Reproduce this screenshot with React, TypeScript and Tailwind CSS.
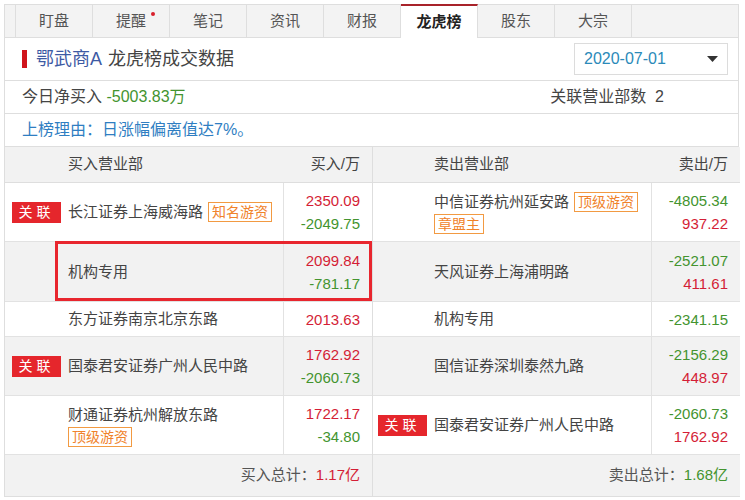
import React from "react";

const tabs = ["盯盘", "提醒", "笔记", "资讯", "财报", "龙虎榜", "股东", "大宗"];

type Row = {
  name: string;
  linked?: boolean;
  tags?: string[];
  nextTags?: string[];
  values: { v: string; up: boolean }[];
};

const buyRows: Row[] = [
  {
    name: "长江证券上海威海路",
    linked: true,
    tags: ["知名游资"],
    values: [
      { v: "2350.09", up: true },
      { v: "-2049.75", up: false },
    ],
  },
  {
    name: "机构专用",
    values: [
      { v: "2099.84", up: true },
      { v: "-781.17", up: false },
    ],
  },
  { name: "东方证券南京北京东路", values: [{ v: "2013.63", up: true }] },
  {
    name: "国泰君安证券广州人民中路",
    linked: true,
    values: [
      { v: "1762.92", up: true },
      { v: "-2060.73", up: false },
    ],
  },
  {
    name: "财通证券杭州解放东路",
    nextTags: ["顶级游资"],
    values: [
      { v: "1722.17", up: true },
      { v: "-34.80", up: false },
    ],
  },
];

const sellRows: Row[] = [
  {
    name: "中信证券杭州延安路",
    tags: ["顶级游资"],
    nextTags: ["章盟主"],
    values: [
      { v: "-4805.34", up: false },
      { v: "937.22", up: true },
    ],
  },
  {
    name: "天风证券上海浦明路",
    values: [
      { v: "-2521.07", up: false },
      { v: "411.61", up: true },
    ],
  },
  { name: "机构专用", values: [{ v: "-2341.15", up: false }] },
  {
    name: "国信证券深圳泰然九路",
    values: [
      { v: "-2156.29", up: false },
      { v: "448.97", up: true },
    ],
  },
  {
    name: "国泰君安证券广州人民中路",
    linked: true,
    values: [
      { v: "-2060.73", up: false },
      { v: "1762.92", up: true },
    ],
  },
];

const rowHeights = ["h-[59px]", "h-[60px]", "h-[35px]", "h-[59px]", "h-[59px]"];

function Tag({ text }: { text: string }) {
  return (
    <span className="inline-flex h-[20px] items-center border border-[#f29a42] px-[3px] text-[14px] leading-none text-[#f0822a] align-middle">
      {text}
    </span>
  );
}

function DeptTable({
  rows,
  side,
}: {
  rows: Row[];
  side: "buy" | "sell";
}) {
  const isBuy = side === "buy";
  return (
    <div className={isBuy ? "border-r border-[#dedede]" : ""}>
      {/* header */}
      <div className="flex h-[36px] items-center border-b border-[#dedede] bg-[#f2f2f2] text-[15px] text-[#444]">
        <div className={`flex-1 ${isBuy ? "pl-[63px]" : "pl-[61px]"}`}>
          {isBuy ? "买入营业部" : "卖出营业部"}
        </div>
        <div className="pr-[12px]">{isBuy ? "买入/万" : "卖出/万"}</div>
      </div>

      {rows.map((row, i) => (
        <div
          key={i}
          className={`relative flex border-b border-[#e2e2e2] ${rowHeights[i]} ${
            i % 2 === 1 ? "bg-[#f2f2f2]" : "bg-white"
          }`}
        >
          <div className={`flex flex-1 items-center ${isBuy ? "pl-[7px]" : "pl-[5px]"}`}>
            <div className="w-[56px] shrink-0">
              {row.linked && (
                <span className="flex h-[21px] w-[49px] items-center justify-center bg-[#e5262c] text-[14px] tracking-[4px] text-white">
                  关联
                </span>
              )}
            </div>
            <div className="text-[15px] leading-[24px] text-[#444]">
              <div className="flex items-center gap-[5px]">
                <span>{row.name}</span>
                {row.tags?.map((t) => <Tag key={t} text={t} />)}
              </div>
              {row.nextTags && (
                <div className="flex items-center gap-[5px]">
                  {row.nextTags.map((t) => (
                    <Tag key={t} text={t} />
                  ))}
                </div>
              )}
            </div>
          </div>
          <div className="flex w-[89px] shrink-0 flex-col items-end justify-center border-l border-[#e2e2e2] pr-[12px] text-[15px] leading-[23px]">
            {row.values.map((val, j) => (
              <span key={j} className={val.up ? "text-[#d41e36]" : "text-[#43942f]"}>
                {val.v}
              </span>
            ))}
          </div>

          {/* annotation box */}
          {isBuy && i === 1 && (
            <div className="pointer-events-none absolute -top-px bottom-0 left-[50px] right-0 border-[3px] border-[#e8262e]" />
          )}
        </div>
      ))}

      {/* footer */}
      <div className="flex h-[42px] items-center justify-end border-b border-[#dedede] bg-[#f2f2f2] pr-[12px] text-[15px] text-[#555]">
        {isBuy ? "买入总计：" : "卖出总计："}
        <span className={isBuy ? "text-[#d41e36]" : "text-[#43942f]"}>
          {isBuy ? "1.17亿" : "1.68亿"}
        </span>
      </div>
    </div>
  );
}

export default function App() {
  return (
    <div className="min-h-[500px] bg-white pl-[4px] pt-[4px] font-['Liberation_Sans','Noto_Sans_CJK_SC',sans-serif]">
      <div className="w-[735px]">
        {/* Tabs */}
        <div className="flex h-[34px] border border-[#dedede] bg-[#f3f3f3]">
          <div className="w-[11px] border-r border-[#dedede]" />
          {tabs.map((t) => {
            const active = t === "龙虎榜";
            return (
              <div
                key={t}
                className={`relative flex w-[77px] items-center justify-center border-r border-[#dedede] text-[15px] ${
                  active
                    ? "-mb-px -mt-px border-t-2 border-t-[#a8232a] bg-white font-bold text-[#222]"
                    : "text-[#555]"
                }`}
              >
                {t}
                {t === "提醒" && (
                  <span className="absolute left-[58px] top-[7px] h-[4px] w-[4px] rounded-full bg-[#d8202c]" />
                )}
              </div>
            );
          })}
        </div>

        <div className="border-x border-[#dedede]">
          {/* Title */}
          <div className="flex h-[43px] items-center border-b border-[#dedede] pl-[17px] pr-[10px]">
            <span className="h-[18px] w-[5px] bg-[#d0141c]" />
            <span className="ml-[9px] text-[18px] text-[#3d5aa4]">鄂武商A</span>
            <span className="ml-[6px] text-[18px] text-[#444]">龙虎榜成交数据</span>
            <div className="ml-auto flex h-[32px] w-[154px] items-center justify-between border border-[#dcdcdc] pl-[9px] pr-[9px]">
              <span className="text-[16px] text-[#2b8ab9]">2020-07-01</span>
              <svg width="11" height="6" viewBox="0 0 11 6">
                <path d="M0 0h11L5.5 6z" fill="#333" />
              </svg>
            </div>
          </div>

          {/* Net buy */}
          <div className="flex h-[33px] items-center border-b border-[#dedede] pl-[17px] pr-[74px] text-[16px] text-[#444]">
            <span>
              今日净买入 <span className="text-[#43942f]">-5003.83万</span>
            </span>
            <span className="ml-auto">关联营业部数&nbsp;&nbsp;2</span>
          </div>

          {/* Reason */}
          <div className="flex h-[33px] items-center border-b border-[#dedede] pl-[17px] text-[16px] text-[#2f7ec2]">
            上榜理由：日涨幅偏离值达7%。
          </div>
        </div>

        {/* Tables */}
        <div className="grid grid-cols-[368px_367px] border-x border-[#dedede]">
          <DeptTable rows={buyRows} side="buy" />
          <DeptTable rows={sellRows} side="sell" />
        </div>
      </div>
    </div>
  );
}
